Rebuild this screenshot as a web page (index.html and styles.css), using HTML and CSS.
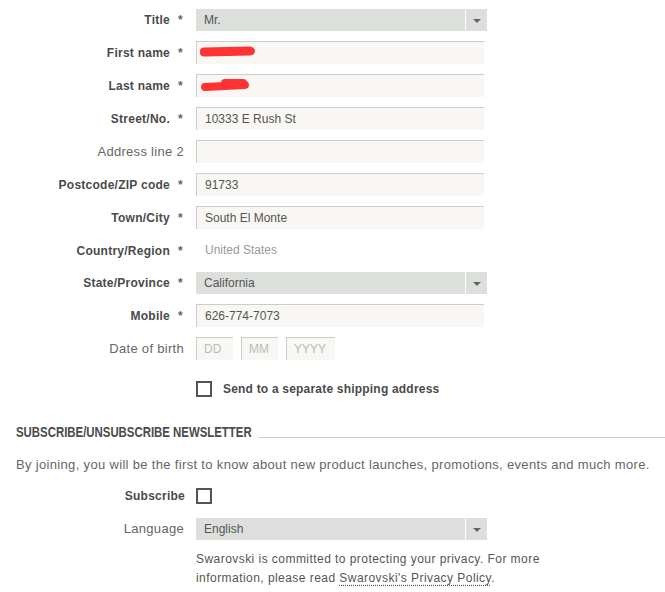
FILE: index.html
```html
<!DOCTYPE html>
<html lang="en">
<head>
<meta charset="utf-8">
<title>Address form</title>
<link rel="stylesheet" href="styles.css">
</head>
<body>
<div class="page">
  <form class="form">
    <div class="row">
      <label class="label req">Title<span class="ast">*</span></label>
      <div class="select"><span class="sel-val">Mr.</span><span class="sel-btn"><span class="tri"></span></span></div>
    </div>
    <div class="row">
      <label class="label req">First name<span class="ast">*</span></label>
      <div class="input"><span class="scribble s1"></span></div>
    </div>
    <div class="row">
      <label class="label req">Last name<span class="ast">*</span></label>
      <div class="input"><span class="scribble s2"></span><span class="scribble s3"></span></div>
    </div>
    <div class="row">
      <label class="label req">Street/No.<span class="ast">*</span></label>
      <div class="input">10333 E Rush St</div>
    </div>
    <div class="row">
      <label class="label opt">Address line 2</label>
      <div class="input"></div>
    </div>
    <div class="row">
      <label class="label req">Postcode/ZIP code<span class="ast">*</span></label>
      <div class="input">91733</div>
    </div>
    <div class="row">
      <label class="label req">Town/City<span class="ast">*</span></label>
      <div class="input">South El Monte</div>
    </div>
    <div class="row">
      <label class="label req">Country/Region<span class="ast">*</span></label>
      <div class="static">United States</div>
    </div>
    <div class="row">
      <label class="label req">State/Province<span class="ast">*</span></label>
      <div class="select"><span class="sel-val">California</span><span class="sel-btn"><span class="tri"></span></span></div>
    </div>
    <div class="row">
      <label class="label req">Mobile<span class="ast">*</span></label>
      <div class="input">626-774-7073</div>
    </div>
    <div class="row">
      <label class="label opt">Date of birth</label>
      <div class="dob">
        <div class="input small ph">DD</div>
        <div class="input small ph">MM</div>
        <div class="input year ph">YYYY</div>
      </div>
    </div>
    <div class="row row-check">
      <span></span>
      <div class="check-line"><span class="box"></span><span class="check-text">Send to a separate shipping address</span></div>
    </div>
  </form>

  <div class="section-head"><h2 class="section-title"><span class="squeeze">SUBSCRIBE/UNSUBSCRIBE NEWSLETTER</span></h2><span class="rule"></span></div>
  <p class="intro">By joining, you will be the first to know about new product launches, promotions, events and much more.</p>

  <div class="form news">
    <div class="row row-sub">
      <label class="label bold-plain">Subscribe</label>
      <div><span class="box"></span></div>
    </div>
    <div class="row">
      <label class="label opt">Language</label>
      <div class="select"><span class="sel-val">English</span><span class="sel-btn"><span class="tri"></span></span></div>
    </div>
    <div class="row">
      <span></span>
      <p class="privacy">Swarovski is committed to protecting your privacy. For more information, please read <a class="plink" href="#">Swarovski's Privacy Policy</a>.</p>
    </div>
  </div>
</div>
</body>
</html>
```

FILE: styles.css
```css
html, body {
  margin: 0;
  padding: 0;
  background: #ffffff;
}
body {
  font-family: "Liberation Sans", Arial, sans-serif;
  font-size: 12px;
  color: #555555;
}
.page {
  width: 665px;
  padding-top: 9px;
  overflow: hidden;
}
.form {
  display: flex;
  flex-direction: column;
  gap: 10px;
}
.row {
  display: grid;
  grid-template-columns: 185px 291px;
  column-gap: 11px;
  align-items: center;
}
.label {
  text-align: right;
  white-space: nowrap;
  line-height: 16px;
}
.label.req {
  font-weight: bold;
  color: #4a4a4a;
  letter-spacing: 0.25px;
}
.ast {
  display: inline-block;
  width: 7px;
  margin-left: 8px;
  text-align: left;
  color: #666666;
  font-weight: bold;
  letter-spacing: 0;
}
.label.opt {
  color: #666666;
  font-size: 13px;
  letter-spacing: 0.3px;
  padding-right: 1px;
}
.label.bold-plain {
  font-weight: bold;
  color: #4a4a4a;
  letter-spacing: 0.25px;
}
.select {
  display: flex;
  height: 22px;
  background: #dcdfdc;
  width: 291px;
}
.sel-val {
  flex: 1;
  line-height: 22px;
  padding-left: 8px;
  color: #555555;
  border-right: 1px solid #ffffff;
}
.sel-btn {
  width: 21px;
  display: flex;
  align-items: center;
  justify-content: center;
}
.tri {
  width: 0;
  height: 0;
  border-left: 4px solid transparent;
  border-right: 4px solid transparent;
  border-top: 4px solid #666666;
  margin-top: 1px;
}
.input {
  box-sizing: border-box;
  height: 23px;
  width: 288px;
  background: #f8f7f3;
  border-top: 1px solid #cccccc;
  border-left: 1px solid #cccccc;
  padding: 1px 0 0 8px;
  line-height: 21px;
  color: #555555;
  position: relative;
}
.static {
  height: 23px;
  line-height: 23px;
  padding-left: 9px;
  color: #999999;
}
.dob {
  display: flex;
  gap: 8px;
}
.input.small { width: 37px; }
.input.year { width: 49px; }
.input.ph {
  color: #bbbbbb;
  padding-left: 7px;
}
.row-check {
  margin-top: 11px;
}
.check-line {
  display: flex;
  align-items: center;
  gap: 11px;
}
.box {
  display: block;
  box-sizing: border-box;
  width: 16px;
  height: 16px;
  border: 2px solid #555555;
  background: #ffffff;
}
.check-text {
  font-weight: bold;
  color: #4a4a4a;
  letter-spacing: 0.2px;
}
.scribble {
  position: absolute;
  display: block;
  background: #ff3333;
}
.scribble.s1 {
  left: 3px;
  top: 5px;
  width: 55px;
  height: 9px;
  border-radius: 5px 6px 6px 5px / 4px 5px 5px 4px;
  transform: rotate(-1deg);
}
.scribble.s2 {
  left: 4px;
  top: 7px;
  width: 48px;
  height: 8px;
  border-radius: 5px;
  transform: rotate(-3deg);
}
.scribble.s3 {
  left: 24px;
  top: 4px;
  width: 26px;
  height: 8px;
  border-radius: 5px;
}
.section-head {
  display: flex;
  align-items: flex-end;
  margin: 27px 0 0 16px;
}
.section-title {
  margin: 0;
  font-family: "Liberation Sans", Arial, sans-serif;
  font-weight: bold;
  font-size: 15px;
  line-height: 15px;
  color: #4a4a4a;
  white-space: nowrap;
}
.squeeze {
  display: inline-block;
  transform: scaleX(0.76);
  transform-origin: 0 50%;
  margin-right: -74px;
}
.rule {
  flex: 1;
  height: 1px;
  background: #cccccc;
  margin-left: 7px;
  margin-bottom: 1px;
}
.intro {
  margin: 18px 0 0 16px;
  color: #666666;
  font-size: 13px;
  letter-spacing: 0.33px;
  line-height: 16px;
  white-space: nowrap;
}
.news {
  margin-top: 15px;
}
.row-sub {
  margin-bottom: 4px;
}
.privacy {
  margin: 0;
  width: 350px;
  line-height: 19px;
  color: #555555;
  font-size: 12px;
  letter-spacing: 0.45px;
}
.plink {
  color: #555555;
  text-decoration: underline dotted #555555;
  text-underline-offset: 3px;
}
```
